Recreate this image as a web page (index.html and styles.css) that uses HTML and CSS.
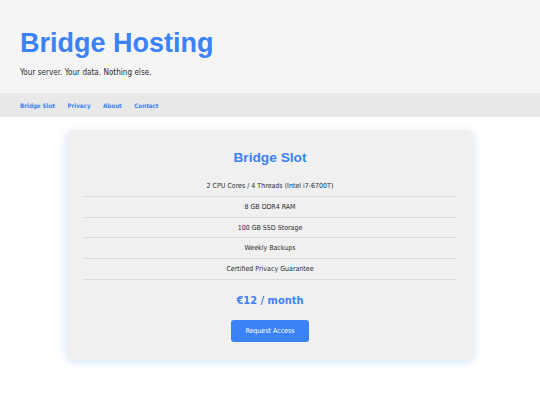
FILE: index.html
```html
<!DOCTYPE html>
<html lang="en">
<head>
<meta charset="utf-8">
<title>Bridge Hosting</title>
<link rel="stylesheet" href="styles.css">
</head>
<body>
<header class="site-header">
  <h1 class="site-title">Bridge Hosting</h1>
  <p class="tagline">Your server. Your data. Nothing else.</p>
</header>
<nav class="site-nav">
  <a href="#slot">Bridge Slot</a>
  <a href="#privacy">Privacy</a>
  <a href="#about">About</a>
  <a href="#contact">Contact</a>
</nav>
<main class="content">
  <section class="plan" id="slot">
    <h2 class="plan-title">Bridge Slot</h2>
    <ul class="features">
      <li>2 CPU Cores / 4 Threads (Intel i7-6700T)</li>
      <li>8 GB DDR4 RAM</li>
      <li>100 GB SSD Storage</li>
      <li>Weekly Backups</li>
      <li>Certified Privacy Guarantee</li>
    </ul>
    <p class="price">€12 / month</p>
    <a class="btn" href="#contact">Request Access</a>
  </section>
</main>
</body>
</html>
```
FILE: styles.css
```css
* { box-sizing: border-box; }
body {
  margin: 0;
  background: #ffffff;
  color: #333333;
  font-family: "DejaVu Sans Condensed", "DejaVu Sans", sans-serif;
}
.site-header {
  background: #f5f5f5;
  padding: 28px 20px 16px;
}
.site-title {
  margin: 0;
  font-family: "Liberation Sans", Arial, sans-serif;
  font-size: 27px;
  font-weight: bold;
  line-height: 31px;
  color: #3b82f6;
}
.tagline {
  margin: 9px 0 0;
  font-size: 8.1px;
  line-height: 9px;
  color: #2b2b2b;
}
.site-nav {
  background: #e8e8e8;
  height: 24px;
  padding: 0 20px;
  display: flex;
  align-items: center;
  gap: 12.5px;
}
.site-nav a {
  color: #3b82f6;
  text-decoration: none;
  font-weight: bold;
  font-size: 6.2px;
}
.content {
  padding: 13px 66px 40px;
}
.plan {
  background: #f0f0f0;
  border-radius: 8px;
  box-shadow: 0 2px 9px rgba(59, 130, 246, 0.22);
  padding: 20px 17px 18px;
  text-align: center;
}
.plan-title {
  margin: 0;
  font-family: "Liberation Sans", Arial, sans-serif;
  font-size: 13.7px;
  line-height: 16px;
  font-weight: bold;
  color: #3b82f6;
}
.features {
  list-style: none;
  margin: 10px 0 0;
  padding: 0;
}
.features li {
  font-size: 7px;
  line-height: 8px;
  padding: 6px 0 5.8px;
  border-bottom: 1px solid #dcdcdc;
  color: #2b2b2b;
}
.price {
  margin: 14px 0 0;
  font-size: 11px;
  line-height: 13px;
  font-weight: bold;
  color: #3b82f6;
}
.btn {
  display: inline-block;
  margin-top: 13px;
  width: 78px;
  height: 22px;
  line-height: 22px;
  background: #3b82f6;
  color: #ffffff;
  text-decoration: none;
  font-size: 7px;
  border-radius: 3px;
}
```
